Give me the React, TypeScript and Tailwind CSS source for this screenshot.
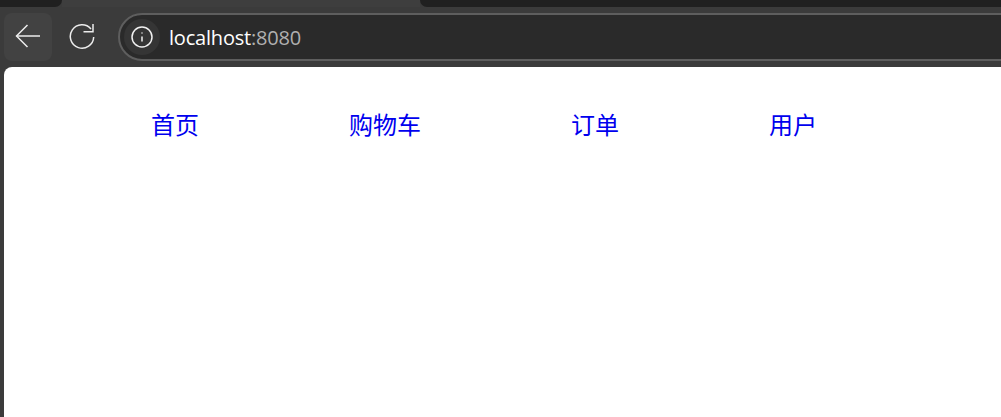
import { Info } from 'lucide-react';

const navItems = ['首页', '购物车', '订单', '用户'];

function BackIcon() {
  return (
    <svg width="26" height="24" viewBox="0 0 26 24" fill="none" stroke="#ececec" strokeWidth="1.5">
      <path d="M1.5 12H25" />
      <path d="M12.5 1L1.5 12L12.5 23" />
    </svg>
  );
}

function ReloadIcon() {
  return (
    <svg width="26" height="26" viewBox="0 0 26 26" fill="none" stroke="#ececec" strokeWidth="1.5">
      <path d="M22 5A11.7 11.7 0 1 0 24.7 13" />
      <path d="M24 0V7.7H14.5" />
    </svg>
  );
}

export default function App() {
  return (
    <div className="w-[1001px] h-[417px] overflow-hidden bg-[#3b3b3b] flex flex-col">
      <div className="h-[7px] flex shrink-0">
        <div className="w-[62px] bg-[#202020] rounded-br-lg" />
        <div className="w-[358px] bg-[#3e3e3e]" />
        <div className="flex-1 bg-[#202020] rounded-bl-lg" />
      </div>

      <div className="h-[60px] shrink-0 flex items-start pl-1">
        <div className="mt-[6px] w-[48px] h-[48px] rounded-lg bg-[#424242] flex items-center justify-center pb-[2px]">
          <BackIcon />
        </div>
        <div className="mt-[6px] w-[60px] h-[48px] flex items-center justify-center pb-[1px]">
          <ReloadIcon />
        </div>
        <div className="mt-[6px] flex-1 h-[48px] ml-[6px] -mr-8 rounded-full border-2 border-[#5e5e5e] bg-[#2a2a2a] flex items-center pl-[4px]">
          <div className="w-[36px] h-[36px] rounded-full bg-[#353535] flex items-center justify-center">
            <Info size={24} color="#f0f0f0" strokeWidth={1.5} />
          </div>
          <div className="ml-[9px] mt-[1px] text-[20px] font-['Open_Sans','Noto_Sans',sans-serif] tracking-[-0.2px]">
            <span className="text-white">localhost</span>
            <span className="text-[#b0b0b0]">:8080</span>
          </div>
        </div>
      </div>

      <div className="flex-1 ml-1 bg-white rounded-tl-lg">
        <nav className="flex gap-[150px] pl-[147px] pt-[41px] font-['Noto_Sans_CJK_SC',sans-serif] text-[24px] leading-[32px] text-[#0000ee]">
          {navItems.map((item) => (
            <a key={item} href="#">
              {item}
            </a>
          ))}
        </nav>
      </div>
    </div>
  );
}
